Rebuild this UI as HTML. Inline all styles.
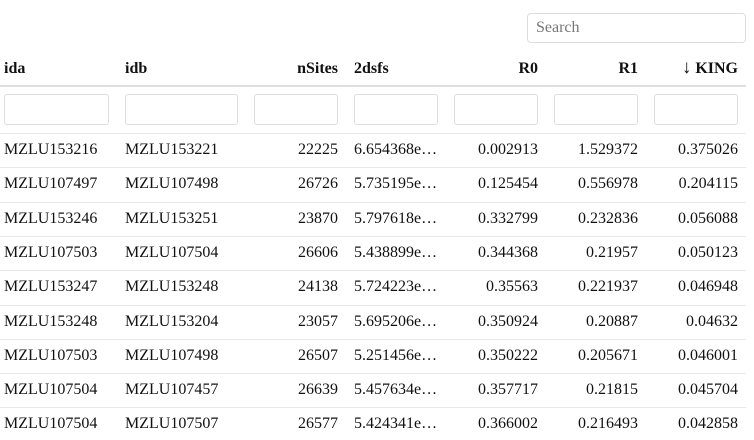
<!DOCTYPE html>
<html><head><style>
body{margin:0;background:#fff;font-family:"Liberation Serif",serif;font-size:16px;color:#111;width:754px;height:440px;overflow:hidden;position:relative}
.s{position:absolute;left:527px;top:13px;width:219px;height:30px;border:1px solid #ddd;border-radius:4px;box-sizing:border-box;padding-left:8px;line-height:28px;color:#777;font-size:16px}
.h,.c{position:absolute;white-space:nowrap}
.h{font-weight:bold;top:60px}
.hl{position:absolute;left:0;width:746px;top:85px;height:2px;background:#ddd}
.f{position:absolute;top:94px;height:31px;border:1px solid #ddd;border-radius:3px;box-sizing:border-box}
.rl{position:absolute;left:0;width:746px;height:1px;background:#e8e8e8}
.r{text-align:right}
.ar{font-size:19px;line-height:16px}
</style></head><body>
<div class="s">Search</div>
<div class="h" style="left:4px">ida</div>
<div class="h" style="left:125px">idb</div>
<div class="h r" style="right:416px">nSites</div>
<div class="h" style="left:354px">2dsfs</div>
<div class="h r" style="right:216px">R0</div>
<div class="h r" style="right:116px">R1</div>
<div class="h r" style="right:16px"><span class="ar">↓</span> KING</div>
<div class="hl"></div>
<div class="f" style="left:4px;width:105px"></div>
<div class="f" style="left:125px;width:113px"></div>
<div class="f" style="left:254px;width:84px"></div>
<div class="f" style="left:354px;width:84px"></div>
<div class="f" style="left:454px;width:84px"></div>
<div class="f" style="left:554px;width:84px"></div>
<div class="f" style="left:654px;width:84px"></div>
<div id="rows"></div>
<script>
var d=[["MZLU153216","MZLU153221","22225","6.654368e…","0.002913","1.529372","0.375026"],
["MZLU107497","MZLU107498","26726","5.735195e…","0.125454","0.556978","0.204115"],
["MZLU153246","MZLU153251","23870","5.797618e…","0.332799","0.232836","0.056088"],
["MZLU107503","MZLU107504","26606","5.438899e…","0.344368","0.21957","0.050123"],
["MZLU153247","MZLU153248","24138","5.724223e…","0.35563","0.221937","0.046948"],
["MZLU153248","MZLU153204","23057","5.695206e…","0.350924","0.20887","0.04632"],
["MZLU107503","MZLU107498","26507","5.251456e…","0.350222","0.205671","0.046001"],
["MZLU107504","MZLU107457","26639","5.457634e…","0.357717","0.21815","0.045704"],
["MZLU107504","MZLU107507","26577","5.424341e…","0.366002","0.216493","0.042858"]];
var h="";
for(var i=0;i<d.length;i++){var y=141+i*34.3;var r=d[i];
h+='<div class="rl" style="top:'+(y-8)+'px"></div>';
h+='<div class="c" style="left:4px;top:'+y+'px">'+r[0]+'</div>';
h+='<div class="c" style="left:125px;top:'+y+'px">'+r[1]+'</div>';
h+='<div class="c" style="right:416px;top:'+y+'px">'+r[2]+'</div>';
h+='<div class="c" style="left:354px;top:'+y+'px">'+r[3]+'</div>';
h+='<div class="c" style="right:216px;top:'+y+'px">'+r[4]+'</div>';
h+='<div class="c" style="right:116px;top:'+y+'px">'+r[5]+'</div>';
h+='<div class="c" style="right:16px;top:'+y+'px">'+r[6]+'</div>';}
document.getElementById("rows").innerHTML=h;
</script>
</body></html>
